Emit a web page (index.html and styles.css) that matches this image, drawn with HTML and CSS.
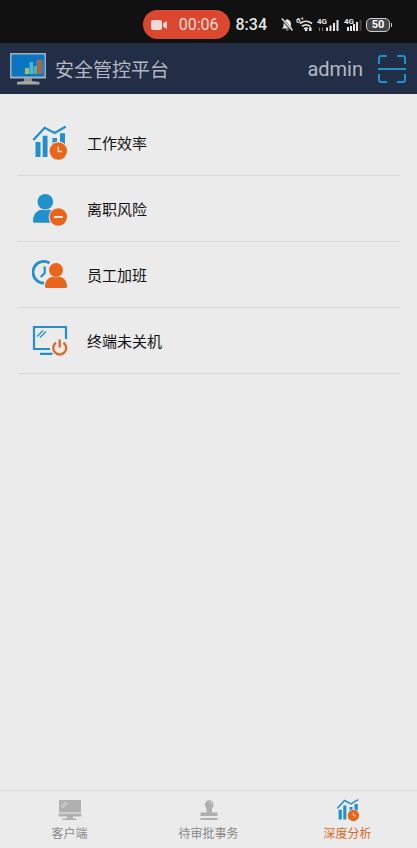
FILE: index.html
```html
<!DOCTYPE html>
<html lang="zh-CN">
<head>
<meta charset="utf-8">
<meta name="viewport" content="width=device-width, initial-scale=1">
<title>安全管控平台</title>
<link rel="stylesheet" href="styles.css">
</head>
<body>
<div class="status">
  <div class="recording">
    <svg width="16" height="10" viewBox="0 0 16 10" fill="#eed9d5"><rect width="11" height="10" rx="2"/><path d="M12 3.500l3-2q1-.5 1 .5v6q0 1-1 .5l-3-2z"/></svg>
    <span>00:06</span>
  </div>
  <span class="clock">8:34</span>
  <div class="signals">
    <svg width="81" height="16" viewBox="0 0 81 16" fill="#e6e6e6">
      <path d="M1 11.500l1.500-2V7q0-3.500 3-4.300Q6 1.500 7 2.700q3 .8 3 4.300v2.500l1.500 2zM4.500 12.500h3.500q-1.700 2-3.500 0z"/>
      <path d="M1 2l10.500 12" stroke="#111" stroke-width="2.600"/>
      <path d="M.8 1.500l10.700 12" stroke="#e6e6e6" stroke-width="1.300"/>
      <g fill="none" stroke="#e6e6e6" stroke-width="1.700"><path d="M19 6.500q6-4.500 12 0"/><path d="M21 9.300q4-3 8 0"/><path d="M23 11.700q2-1.400 4 0"/></g>
      <circle cx="25" cy="13" r="1.300"/><path d="M28 14v-3l1.300-1.500L30.600 11v3z"/>
      <text class="tag" x="15" y="6">6⁺</text>
      <text class="tag" x="36" y="7">4G</text>
      <path d="M38 10.500h1V14h-1zM41 10.500h1V14h-1z" fill="#777"/>
      <path d="M45 10.500h2V14h-2zM48.500 8.500h2V14h-2zM52 6h2v8h-2zM55.500 3h2v11h-2z"/>
      <text class="tag" x="63" y="7">4G</text>
      <path d="M66 10h2v4h-2zM69 9h2v5h-2zM72 7h2v7h-2zM75 5h2v9h-2z"/><path d="M78.500 3h2v11h-2z" fill="#444"/>
    </svg>
    <span class="battery">50</span>
  </div>
</div>

<header class="header">
  <svg width="36" height="32" viewBox="0 0 36 32">
    <path d="M14 25h8v4h-8z" fill="#8b8f90"/><path d="M7 29q11-2 22.500 0v2.500H7z" fill="#a6a8a5"/>
    <path d="M0 0h36v25.500H0z" fill="#a4afb8"/><path d="M1.500 1.500h33v22h-33z" fill="#0b75c2"/>
    <path d="M13 20.500l4-1V16h9V7h8.500v14H13z" fill="#3183b5"/>
    <path d="M15 15h4v6h-4z" fill="#a2be68"/><path d="M19.500 9h3.500v12h-3.500z" fill="#4db4da"/><path d="M23.500 13h3.500v8h-3.500z" fill="#49b5a5"/><path d="M27.500 6.500H31V21h-3.500z" fill="#c95b2b"/>
  </svg>
  <h1 class="title">安全管控平台</h1>
  <span class="user">admin</span>
  <button class="scan" type="button" aria-label="扫一扫">
    <svg width="28" height="28" viewBox="0 0 28 28" fill="none" stroke="#2091cb" stroke-width="2"><path d="M1 9V3q0-2 2-2h6M19 1h6q2 0 2 2v6M27 19v6q0 2-2 2h-6M9 27H3q-2 0-2-2v-6M0 14h28"/></svg>
  </button>
</header>

<main class="content">
  <ul class="menu">
    <li><a class="row" href="#efficiency">
      <svg width="36" height="37" viewBox="0 0 36 37">
        <g id="chart">
          <path d="M2 15.300L12.700 3.800l10 5.200L33 3" fill="none" stroke="#2190cd" stroke-width="2.300" stroke-linecap="round"/>
          <path d="M3.500 18h5v15h-5zM10.700 11.700h4.800V33h-4.800zM20.500 14h4.500v8h-4.500zM28 9.300h5V24h-5z" fill="#2190cd"/>
          <circle cx="26.300" cy="27" r="9.700" fill="#ebebeb"/><circle cx="26.300" cy="27" r="8.700" fill="#e8651a"/>
          <path d="M26.300 22.500v5H30" fill="none" stroke="#f5ded0" stroke-width="1.500"/>
        </g>
      </svg>
      <span>工作效率</span></a></li>
    <li><a class="row" href="#resign">
      <svg width="36" height="37" viewBox="0 0 36 37">
        <circle cx="13.300" cy="11.700" r="7.800" fill="#2190cd"/>
        <path d="M1 31q0-7 5-10 2-1.300 4-1.200 3.500.9 7 0 3-.2 5 2v11H2.500Q1 32.800 1 31z" fill="#2190cd"/>
        <circle cx="26.300" cy="27" r="9.700" fill="#ebebeb"/><circle cx="26.300" cy="27" r="8.700" fill="#e8651a"/>
        <path d="M22 27h8.700" stroke="#f5e6dc" stroke-width="2"/>
      </svg>
      <span>离职风险</span></a></li>
    <li><a class="row" href="#overtime">
      <svg width="36" height="37" viewBox="0 0 36 37">
        <path d="M17.500 7A10.800 10.800 0 1 0 12 27" fill="none" stroke="#2190cd" stroke-width="2.800"/>
        <path d="M12.700 10.500V17l-4 4" fill="none" stroke="#2190cd" stroke-width="2.200"/>
        <circle cx="24" cy="14" r="7" fill="#e8651a"/>
        <path d="M13 30.500q0-6.500 5-9 1.500-.7 3-.5 3 .6 6 0 1.500-.2 3 .5 5 2.500 5 9 0 1.500-1.500 1.500h-19Q13 32 13 30.500z" fill="#e8651a"/>
      </svg>
      <span>员工加班</span></a></li>
    <li><a class="row" href="#poweron">
      <svg width="36" height="37" viewBox="0 0 36 37" fill="none">
        <path d="M34 17V5H2v22h16M8 31.800h12.500" stroke="#2190cd" stroke-width="2.200"/>
        <path d="M5 14.500L11 8.500M8 15.500L14 9.500" stroke="#2190cd" stroke-width="1.200"/>
        <path d="M24 20.700a6.500 6.500 0 1 0 7.400 0M27.700 17.500v8" stroke="#e0661f" stroke-width="2.300"/>
      </svg>
      <span>终端未关机</span></a></li>
  </ul>
</main>

<nav class="tabs">
  <a class="tab" href="#clients">
    <svg width="24" height="24" viewBox="0 0 24 24" fill="#b0b0b0"><path d="M1 2h22v12.500H1zM.500 15.500h23v2q0 1-1 1h-21q-1 0-1-1zM9 18.500h6v2h3.500V22h-14v-1.500H9z"/><path d="M3 9l5-5M4.500 10l5-5" stroke="#e2e2e2" stroke-width=".9"/></svg>
    <span>客户端</span></a>
  <a class="tab" href="#approvals">
    <svg width="24" height="24" viewBox="0 0 24 24" fill="#b0b0b0"><path d="M9.500 10.500Q8 9 8 6.500a4.300 4.300 0 0 1 8.600 0q0 2.500-1.600 4v4h5.500V18h-17v-3.500h6zM3.500 20h17v2h-17z"/><path d="M12.500 4.500q2 0 2 2" fill="none" stroke="#ddd" stroke-width=".9"/></svg>
    <span>待审批事务</span></a>
  <a class="tab active" href="#analysis" aria-current="page">
    <svg width="24" height="24" viewBox="0 0 36 37"><use href="#chart"/></svg>
    <span>深度分析</span></a>
</nav>
</body>
</html>
```
FILE: styles.css
```css
* { box-sizing: border-box; }

body {
  margin: 0;
  min-height: 100vh;
  display: flex;
  flex-direction: column;
  background: #ebebeb;
  color: #111;
  font-family: Roboto, "Noto Sans CJK SC", sans-serif;
}

svg { display: block; flex: none; }
a { color: inherit; text-decoration: none; }

.status {
  display: flex;
  align-items: center;
  justify-content: flex-end;
  height: 43px;
  padding: 6px 27px 0 0;
  background: #111;
  color: #e6e6e6;
}

.recording {
  display: flex;
  align-items: center;
  justify-content: space-between;
  width: 87px;
  height: 29px;
  padding: 0 11px 0 8px;
  border-radius: 15px;
  background: #db482f;
  color: #f0dcd8;
  font-size: 16px;
}

.clock {
  margin: 0 14px 0 6px;
  font-size: 16px;
  font-weight: 500;
}

.signals {
  display: flex;
  align-items: center;
  gap: 4px;
}

.tag {
  font-size: 8px;
  font-weight: 700;
}

.battery {
  position: relative;
  width: 24px;
  height: 14px;
  border: 1px solid #ccc;
  border-radius: 5px;
  background: #444;
  color: #fff;
  font-size: 11px;
  font-weight: 700;
  line-height: 12px;
  text-align: center;
}

.battery::after {
  content: "";
  position: absolute;
  top: 4px;
  right: -3px;
  width: 1px;
  height: 4px;
  background: #ccc;
}

.header {
  display: flex;
  align-items: center;
  height: 51px;
  padding: 0 11px 0 10px;
  background: #222e45;
  color: #b4b8c0;
}

.title {
  flex: 1;
  margin: 0 0 0 9px;
  font-size: 19px;
  font-weight: 400;
}

.user { font-size: 20px; }

.scan {
  margin-left: 15px;
  padding: 0;
  border: 0;
  background: none;
}

.content {
  flex: 1;
  padding: 16px 17px 0 18px;
}

.menu {
  margin: 0;
  padding: 0;
  list-style: none;
}

.row {
  display: flex;
  align-items: center;
  gap: 19px;
  height: 66px;
  padding-left: 14px;
  border-bottom: 1px solid #dadada;
  font-size: 15px;
}

.tabs {
  display: grid;
  grid-template-columns: repeat(3, 1fr);
  height: 58px;
  border-top: 1px solid #dcdcdc;
}

.tab {
  display: flex;
  flex-direction: column;
  align-items: center;
  gap: 3px;
  padding-top: 7px;
  color: #888;
  font-size: 12px;
  line-height: 18px;
}

.active { color: #e0661f; }
```
